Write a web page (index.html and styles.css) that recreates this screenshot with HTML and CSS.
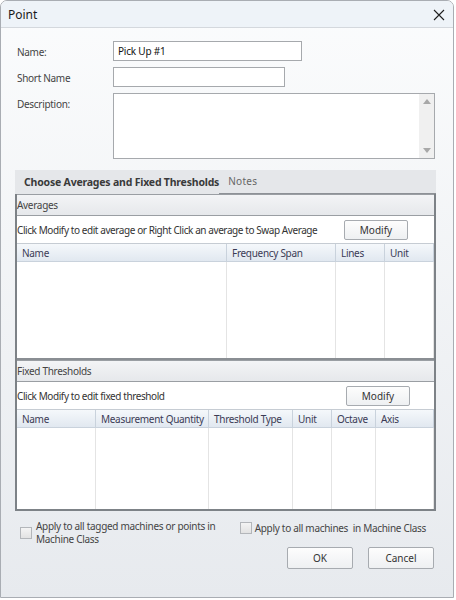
FILE: index.html
```html
<!DOCTYPE html>
<html lang="en">
<head>
    <meta charset="UTF-8">
    <meta name="viewport" content="width=device-width, initial-scale=1.0">
    <title>Point</title>
    <link rel="stylesheet" href="styles.css">
</head>
<body>
    <div class="dialog">
        <div class="titlebar">
            <span class="title">Point</span>
            <svg class="close" width="12" height="12" viewBox="0 0 12 12">
                <path d="M1 1 L11 11 M11 1 L1 11" stroke="#1f1f1f" stroke-width="1.1" fill="none"/>
            </svg>
        </div>

        <div class="content">
            <div class="fields">
                <label>Name:</label>
                <input type="text" class="input name-input" value="Pick Up #1">

                <label>Short Name</label>
                <input type="text" class="input short-input">

                <label>Description:</label>
                <div class="textarea">
                    <div class="scrollbar">
                        <span class="arrow up"></span>
                        <span class="arrow down"></span>
                    </div>
                </div>
            </div>

            <div class="tabs">
                <div class="tab-strip">
                    <span class="tab active">Choose Averages and Fixed Thresholds</span>
                    <span class="tab">Notes</span>
                </div>

                <div class="tab-page">
                    <!-- Averages -->
                    <div class="group">
                        <div class="group-header">Averages</div>
                        <div class="toolbar">
                            <span>Click Modify to edit average or Right Click an average to Swap Average</span>
                            <button class="btn modify">Modify</button>
                        </div>
                        <div class="grid grid-averages">
                            <div class="th">Name</div>
                            <div class="th">Frequency Span</div>
                            <div class="th">Lines</div>
                            <div class="th">Unit</div>
                            <div class="td"></div>
                            <div class="td"></div>
                            <div class="td"></div>
                            <div class="td"></div>
                        </div>
                    </div>

                    <!-- Fixed thresholds -->
                    <div class="group last">
                        <div class="group-header">Fixed Thresholds</div>
                        <div class="toolbar">
                            <span>Click Modify to edit fixed threshold</span>
                            <button class="btn modify modify-2">Modify</button>
                        </div>
                        <div class="grid grid-thresholds">
                            <div class="th">Name</div>
                            <div class="th">Measurement Quantity</div>
                            <div class="th">Threshold Type</div>
                            <div class="th">Unit</div>
                            <div class="th">Octave</div>
                            <div class="th">Axis</div>
                            <div class="td"></div>
                            <div class="td"></div>
                            <div class="td"></div>
                            <div class="td"></div>
                            <div class="td"></div>
                            <div class="td"></div>
                        </div>
                    </div>
                </div>
            </div>

            <div class="options">
                <label class="check check-1">
                    <span class="box"></span>
                    <span>Apply to all tagged machines or points in<br>Machine Class</span>
                </label>
                <label class="check check-2">
                    <span class="box"></span>
                    <span>Apply to all machines&nbsp; in Machine Class</span>
                </label>
            </div>

            <div class="buttons">
                <button class="btn dlg-btn">OK</button>
                <button class="btn dlg-btn">Cancel</button>
            </div>
        </div>
    </div>
</body>
</html>
```

FILE: styles.css
```css
body {
    margin: 0;
    background-color: #ffffff;
    font-family: "Noto Sans", sans-serif;
    font-size: 10px;
    letter-spacing: -0.3px;
    color: #333333;
}

.dialog {
    width: 452px;
    height: 596px;
    border: 1px solid #a9adb3;
    border-radius: 7px 7px 0 0;
    overflow: hidden;
    display: flex;
    flex-direction: column;
    background: linear-gradient(#fbfcfd, #e7eaee);
}

.titlebar {
    height: 26px;
    flex: none;
    display: flex;
    align-items: center;
    justify-content: space-between;
    padding: 0 8px 0 7px;
    background-color: #eef3f8;
    border-bottom: 1px solid #d4d8dd;
}

.title {
    font-size: 12px;
    letter-spacing: 0;
    color: #1a1a1a;
}

.close {
    margin-top: 1px;
}

.content {
    flex: 1;
    padding: 13px 18px 0 13px;
    display: flex;
    flex-direction: column;
}

/* Form fields */
.fields {
    display: grid;
    grid-template-columns: 99px 1fr;
    row-gap: 6px;
    align-items: start;
}

.fields label {
    padding: 4px 0 0 3px;
    color: #444;
}

.input {
    box-sizing: border-box;
    height: 20px;
    border: 1px solid #a6a9ad;
    background: #fff;
    font-family: inherit;
    font-size: 10px;
    letter-spacing: -0.2px;
    padding: 0 4px;
    color: #111;
}

.name-input {
    width: 189px;
}

.short-input {
    width: 172px;
}

.textarea {
    box-sizing: border-box;
    height: 66px;
    border: 1px solid #a6a9ad;
    background: #fff;
    display: flex;
    justify-content: flex-end;
}

.scrollbar {
    width: 15px;
    background: #f0f0f0;
    display: flex;
    flex-direction: column;
    justify-content: space-between;
    align-items: center;
    padding: 5px 0;
}

.arrow {
    width: 0;
    height: 0;
    border-left: 4px solid transparent;
    border-right: 4px solid transparent;
}

.arrow.up {
    border-bottom: 5px solid #a8a8a8;
}

.arrow.down {
    border-top: 5px solid #a8a8a8;
}

/* Tabs */
.tabs {
    margin-top: 11px;
    margin-left: 1px;
    width: 421px;
}

.tab-strip {
    display: flex;
    align-items: flex-end;
    height: 24px;
    background-color: #e5e7ea;
}

.tab {
    padding: 0 0 5px 9px;
    white-space: nowrap;
}

.tab.active {
    font-weight: bold;
    color: #3a3a3a;
    font-size: 10.5px;
    letter-spacing: -0.2px;
}

.tab:last-child {
    flex: 1;
    padding-left: 9px;
    border-bottom: 1px solid #8d9196;
    color: #666;
    letter-spacing: 0.3px;
}

.tab-page {
    border: 2px solid #7d8287;
    border-top: none;
    background: #fff;
}

.group {
    border-bottom: 2px solid #8a8e93;
}

.group.last {
    border-bottom: none;
}

.group-header {
    height: 20px;
    line-height: 20px;
    background: linear-gradient(#f3f4f6, #e6e8eb);
    border-top: 1px solid #9a9ea3;
    border-bottom: 1px solid #9a9ea3;
    color: #444;
}

.toolbar {
    height: 27px;
    display: flex;
    align-items: center;
    justify-content: space-between;
    padding-right: 26px;
    white-space: nowrap;
    letter-spacing: -0.42px;
}

.btn {
    font-family: inherit;
    font-size: 10px;
    letter-spacing: 0;
    color: #333;
    background: linear-gradient(#fdfdfd, #eef0f2);
    border: 1px solid #a7abb0;
    border-radius: 2px;
    padding: 0;
}

.modify {
    width: 64px;
    height: 20px;
}

.modify-2 {
    margin-right: -2px;
}

/* Tables */
.grid {
    display: grid;
    border-top: 1px solid #c6ccd3;
}

.grid-averages {
    grid-template-columns: 210px 109px 49px 1fr;
    grid-template-rows: 18px 96px;
}

.grid-thresholds {
    grid-template-columns: 79px 113px 84px 39px 44px 1fr;
    grid-template-rows: 18px 81px;
}

.th {
    background: linear-gradient(#f5f8fb, #e1e8f0);
    border-right: 1px solid #c9d2dc;
    border-bottom: 1px solid #c9d2dc;
    padding-left: 5px;
    line-height: 18px;
    color: #3b3b55;
    white-space: nowrap;
    overflow: hidden;
}

.td {
    border-right: 1px solid #e4e4e4;
}

/* Options */
.options {
    display: flex;
    justify-content: space-between;
    align-items: flex-start;
    padding: 9px 0 0 6px;
    height: 26px;
}

.check {
    display: flex;
    align-items: center;
    gap: 4px;
    line-height: 12.5px;
    color: #444;
}

.box {
    flex: none;
    width: 10px;
    height: 10px;
    border: 1px solid #b3b6ba;
    background: linear-gradient(#f4f4f4, #e2e2e2);
}

.check-2 {
    margin-top: 2px;
    margin-right: 9px;
    gap: 3px;
}

.buttons {
    display: flex;
    justify-content: flex-end;
    gap: 15px;
    margin-top: 1px;
    padding-right: 1px;
}

.dlg-btn {
    width: 66px;
    height: 22px;
}
```
